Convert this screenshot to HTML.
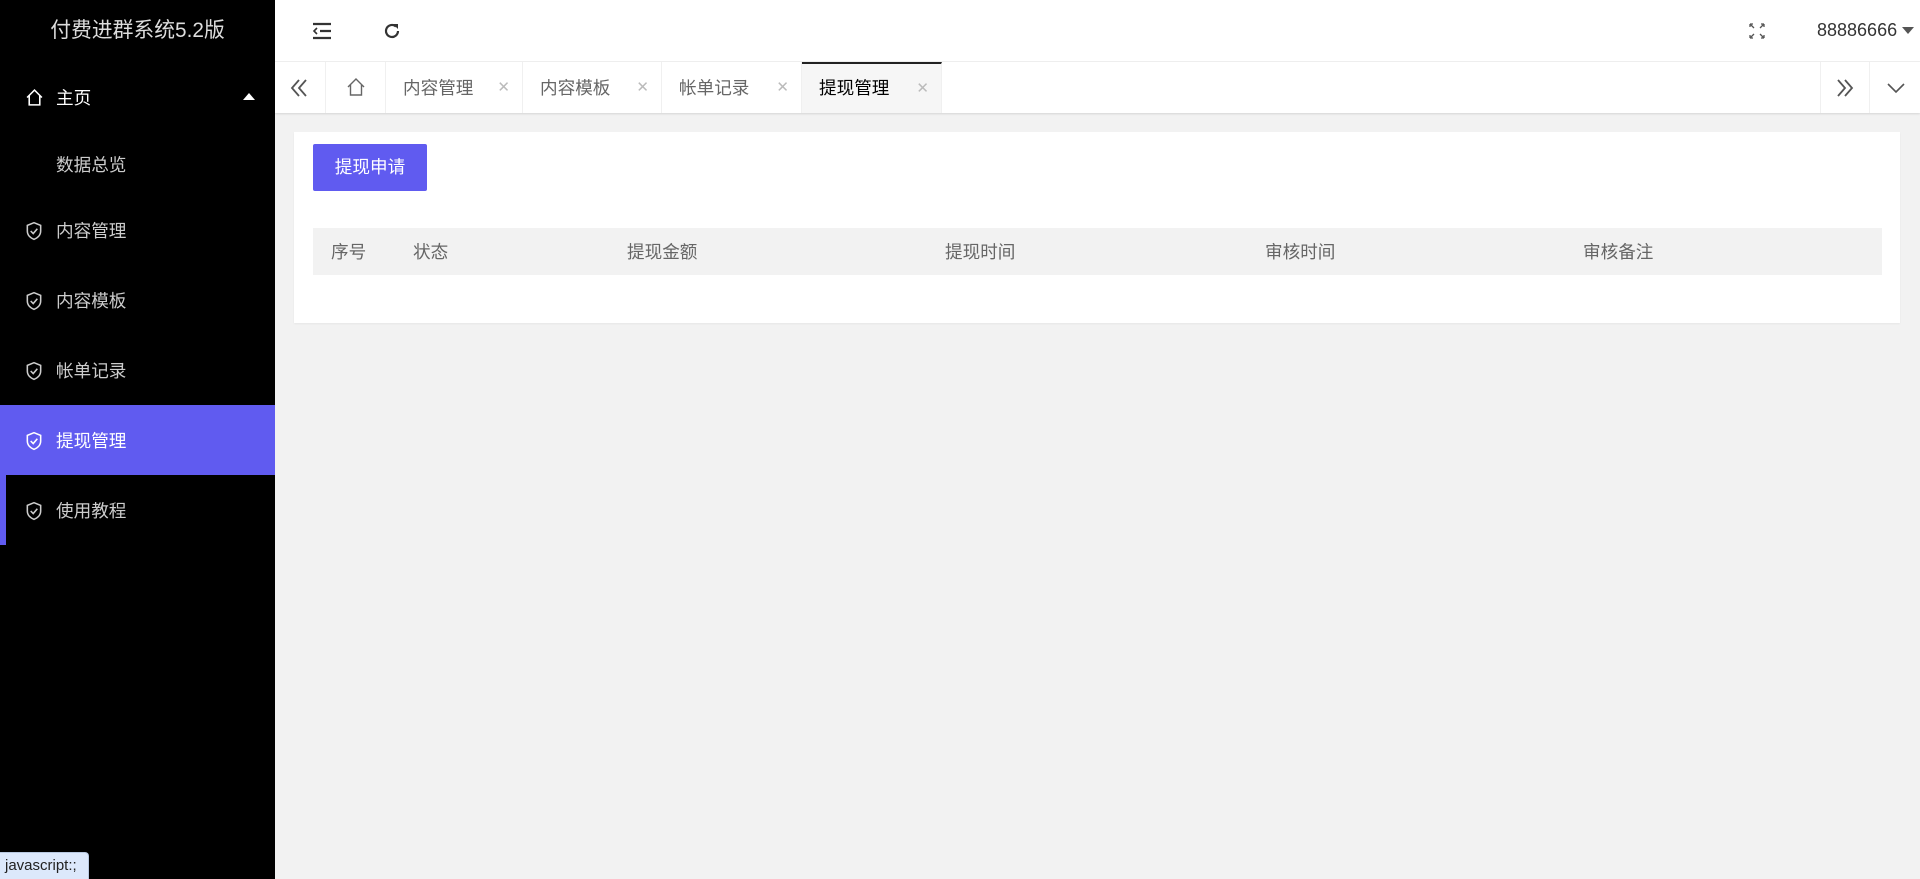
<!DOCTYPE html>
<html><head><meta charset="utf-8"><style>
*{margin:0;padding:0;box-sizing:border-box}
body{width:1920px;height:879px;overflow:hidden;background:#f2f2f2;font-family:"Liberation Sans","Noto Sans CJK SC",sans-serif;position:relative}
.side{position:absolute;left:0;top:0;width:275px;height:879px;background:#000}
.logo{position:absolute;left:0;top:0;width:275px;height:62px;line-height:62px;text-align:center;color:#ddd;font-size:20.8px}
.mi{position:absolute;left:0;width:275px;height:70px;line-height:72px;color:#ccc;font-size:17.6px;padding-left:56px}
.mi svg{position:absolute;left:25px;top:26px}
.head{position:absolute;left:275px;top:0;right:0;height:62px;background:#fff;border-bottom:1px solid #f0f0f0}
.tabs{position:absolute;left:275px;top:62px;right:0;height:51px;background:#fff;box-shadow:0 1px 2px rgba(0,0,0,.12)}
.tab{position:absolute;top:0;height:51px;line-height:52px;border-right:1px solid #f0f0f0;font-size:17.6px;color:#666;padding-left:17px}
.tab .x{position:absolute;right:12px;top:0;color:#bbb;font-size:15px}
.card{position:absolute;left:294px;top:132px;width:1606px;height:191px;background:#fff;box-shadow:0 1px 2px rgba(0,0,0,.05)}
.btn{position:absolute;left:19px;top:12px;width:114px;height:47px;background:#605bf0;color:#fff;font-size:17.6px;line-height:47px;text-align:center;border-radius:2px}
.th{position:absolute;left:19px;top:96px;width:1569px;height:47px;background:#f2f2f2;font-size:17.6px;color:#666;line-height:48px}
.th span{position:absolute;top:0}
</style></head><body>
<div class="side">
<div class="logo">付费进群系统5.2版</div>
<div class="mi" style="top:62px;color:#fff">
<svg width="19" height="19" viewBox="0 0 18 18" style="top:26px"><path d="M2 9L9 2l7 7M4 7v9h10V7" fill="none" stroke="#fff" stroke-width="1.5"/></svg>主页
<span style="position:absolute;left:243px;top:31px;width:0;height:0;border-left:6px solid transparent;border-right:6px solid transparent;border-bottom:7px solid #fff"></span></div>
<div class="mi" style="top:129px">数据总览</div>
<div class="mi" style="top:195px"><svg width="18" height="20" viewBox="0 0 16 18"><path d="M8 1.5L14 4v5c0 4-3 6.5-6 7.5C5 15.5 2 13 2 9V4z" fill="none" stroke="#ccc" stroke-width="1.4"/><path d="M5 9l2.3 2.3L11 7" fill="none" stroke="#ccc" stroke-width="1.4"/></svg>内容管理</div>
<div class="mi" style="top:265px"><svg width="18" height="20" viewBox="0 0 16 18"><path d="M8 1.5L14 4v5c0 4-3 6.5-6 7.5C5 15.5 2 13 2 9V4z" fill="none" stroke="#ccc" stroke-width="1.4"/><path d="M5 9l2.3 2.3L11 7" fill="none" stroke="#ccc" stroke-width="1.4"/></svg>内容模板</div>
<div class="mi" style="top:335px"><svg width="18" height="20" viewBox="0 0 16 18"><path d="M8 1.5L14 4v5c0 4-3 6.5-6 7.5C5 15.5 2 13 2 9V4z" fill="none" stroke="#ccc" stroke-width="1.4"/><path d="M5 9l2.3 2.3L11 7" fill="none" stroke="#ccc" stroke-width="1.4"/></svg>帐单记录</div>
<div class="mi" style="top:405px;background:#605bf0;color:#fff"><svg width="18" height="20" viewBox="0 0 16 18"><path d="M8 1.5L14 4v5c0 4-3 6.5-6 7.5C5 15.5 2 13 2 9V4z" fill="none" stroke="#fff" stroke-width="1.4"/><path d="M5 9l2.3 2.3L11 7" fill="none" stroke="#fff" stroke-width="1.4"/></svg>提现管理</div>
<div class="mi" style="top:475px;border-left:6px solid #605bf0"><svg width="18" height="20" viewBox="0 0 16 18" style="left:19px"><path d="M8 1.5L14 4v5c0 4-3 6.5-6 7.5C5 15.5 2 13 2 9V4z" fill="none" stroke="#ccc" stroke-width="1.4"/><path d="M5 9l2.3 2.3L11 7" fill="none" stroke="#ccc" stroke-width="1.4"/></svg><span style="margin-left:-6px">使用教程</span></div>
</div>
<div class="head">
<svg style="position:absolute;left:37px;top:22px" width="20" height="18" viewBox="0 0 20 18"><path d="M1 2h18M8 9h11M1 16h18" stroke="#333" stroke-width="2.2"/><path d="M5 6L2 9l3 3" fill="none" stroke="#333" stroke-width="1.6"/></svg>
<svg style="position:absolute;left:107px;top:21px" width="20" height="20" viewBox="0 0 20 20"><path d="M16 10a6 6 0 1 1-2-4.5" fill="none" stroke="#333" stroke-width="2.2"/><path d="M11 3h5v5z" fill="#333"/></svg>
<svg style="position:absolute;left:1474px;top:23px" width="16" height="16" viewBox="0 0 16 16" fill="none" stroke="#555" stroke-width="1.3"><path d="M1 1l4 4M1 1h3M1 1v3M15 1l-4 4M15 1h-3M15 1v3M1 15l4-4M1 15h3M1 15v-3M15 15l-4-4M15 15h-3M15 15v-3"/></svg>
<div style="position:absolute;left:1542px;top:20px;font-size:18px;color:#333">88886666</div>
<span style="position:absolute;left:1627px;top:27px;border-left:6px solid transparent;border-right:6px solid transparent;border-top:7px solid #555"></span>
</div>
<div class="tabs">
<div class="tab" style="left:0;width:51px;padding:0"><svg style="position:absolute;left:14px;top:17px" width="20" height="18" viewBox="0 0 20 18" fill="none" stroke="#555" stroke-width="1.8"><path d="M10 1L3 9l7 8M17 1l-7 8 7 8"/></svg></div>
<div class="tab" style="left:51px;width:60px;padding:0"><svg style="position:absolute;left:20px;top:15px" width="20" height="20" viewBox="0 0 20 20" fill="none" stroke="#666" stroke-width="1.4"><path d="M2 10l8-8 8 8M4.5 8v10h11V8"/></svg></div>
<div class="tab" style="left:111px;width:137px">内容管理<span class="x">✕</span></div>
<div class="tab" style="left:248px;width:139px">内容模板<span class="x">✕</span></div>
<div class="tab" style="left:387px;width:140px">帐单记录<span class="x">✕</span></div>
<div class="tab" style="left:527px;width:140px;background:#f6f6f6;color:#000;border-top:2px solid #222;line-height:48px">提现管理<span class="x" style="line-height:49px">✕</span></div>
<div class="tab" style="left:1545px;width:50px;padding:0;border-left:1px solid #f0f0f0"><svg style="position:absolute;left:14px;top:17px" width="20" height="18" viewBox="0 0 20 18" fill="none" stroke="#555" stroke-width="1.8"><path d="M3 1l7 8-7 8M10 1l7 8-7 8"/></svg></div>
<div class="tab" style="left:1595px;width:50px;padding:0;border:0"><svg style="position:absolute;left:16px;top:20px" width="20" height="12" viewBox="0 0 20 12" fill="none" stroke="#555" stroke-width="1.6"><path d="M2 2l8 8 8-8"/></svg></div>
</div>
<div class="card">
<div class="btn">提现申请</div>
<div class="th"><span style="left:18px">序号</span><span style="left:100px">状态</span><span style="left:314px">提现金额</span><span style="left:632px">提现时间</span><span style="left:952px">审核时间</span><span style="left:1270px">审核备注</span></div>
</div>
<div style="position:absolute;left:0;top:852px;width:89px;height:27px;background:#dce8fb;border:1px solid #b8c8e0;border-left:0;border-bottom:0;border-radius:0 4px 0 0;font-size:15px;color:#222;line-height:26px;padding-left:5px">javascript:;</div>
</body></html>
